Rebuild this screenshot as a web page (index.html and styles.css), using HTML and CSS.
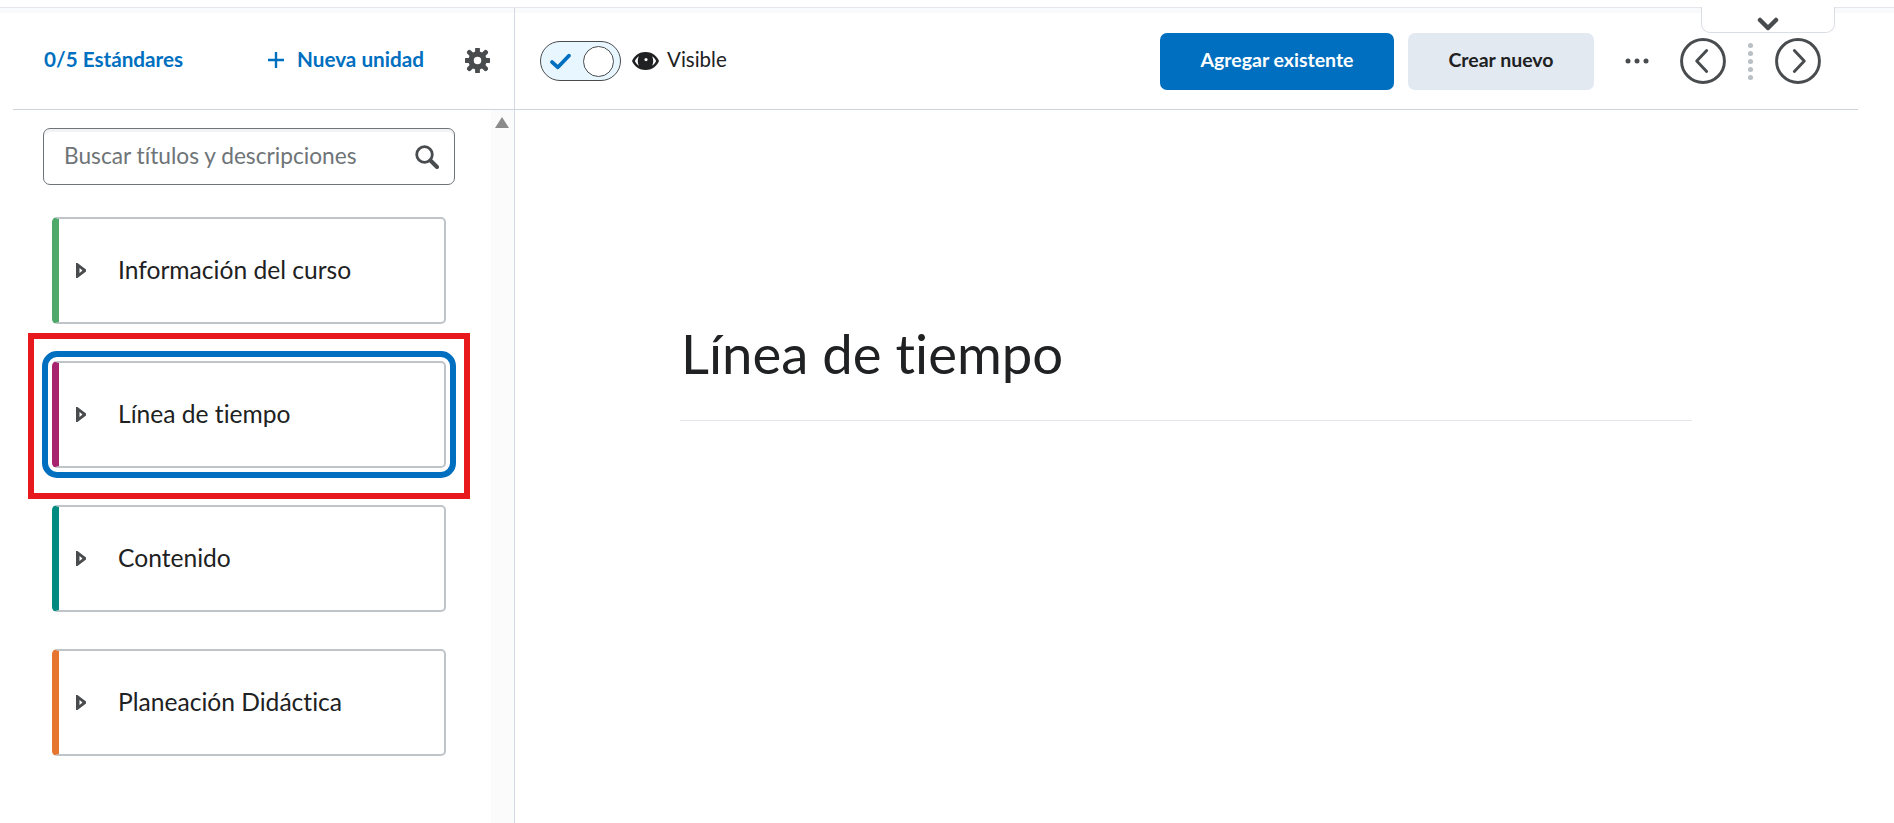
FILE: index.html
```html
<!DOCTYPE html>
<html lang="es">
<head>
<meta charset="utf-8">
<title>Línea de tiempo</title>
<link rel="stylesheet" href="styles.css">
</head>
<body>
<div class="top-rule"></div>
<div class="band"><span class="band-left"></span></div>
<div class="layout">
  <aside class="sidebar">
    <div class="side-head">
      <a class="standards">0/5 Estándares</a>
      <a class="new-unit">
        <svg class="plus" viewBox="0 0 16 16"><path d="M8 0v16M0 8h16" fill="none" stroke="#006fbf" stroke-width="2.400"/></svg>
        <span>Nueva unidad</span>
      </a>
      <svg class="gear" viewBox="0 0 24 24"><circle cx="12" cy="12" r="6.200" fill="none" stroke="#494c4e" stroke-width="5.200"/><path d="M12 1v4M12 19v4M1 12h4M19 12h4M4.200 4.200L7 7M17 17l2.800 2.800M4.200 19.800L7 17M17 7l2.800-2.800" fill="none" stroke="#494c4e" stroke-width="4.600" stroke-linecap="round"/></svg>
    </div>
    <div class="side-body">
      <div class="side-content">
        <div class="search">
          <span class="placeholder">Buscar títulos y descripciones</span>
          <svg class="search-icon" viewBox="0 0 24 24"><circle cx="9.500" cy="9.500" r="7.800" fill="none" stroke="#494c4e" stroke-width="2.800"/><path d="M15.500 15.500l6.500 6.500" stroke="#494c4e" stroke-width="4" stroke-linecap="round"/></svg>
        </div>
        <ul class="cards">
          <li class="card green"><svg class="caret" viewBox="0 0 10 15"><path fill="#494c4e" fill-rule="evenodd" d="M0 0h1.500L10 6.500v2L1.500 15H0zM3.500 5v5l3-2.500z"/></svg><span>Información del curso</span></li>
          <li class="card purple selected"><svg class="caret" viewBox="0 0 10 15"><path fill="#494c4e" fill-rule="evenodd" d="M0 0h1.500L10 6.500v2L1.500 15H0zM3.500 5v5l3-2.500z"/></svg><span>Línea de tiempo</span><i class="annotation"></i></li>
          <li class="card teal"><svg class="caret" viewBox="0 0 10 15"><path fill="#494c4e" fill-rule="evenodd" d="M0 0h1.500L10 6.500v2L1.500 15H0zM3.500 5v5l3-2.500z"/></svg><span>Contenido</span></li>
          <li class="card orange"><svg class="caret" viewBox="0 0 10 15"><path fill="#494c4e" fill-rule="evenodd" d="M0 0h1.500L10 6.500v2L1.500 15H0zM3.500 5v5l3-2.500z"/></svg><span>Planeación Didáctica</span></li>
        </ul>
      </div>
      <div class="scroll-track"><span class="scroll-up"></span></div>
    </div>
  </aside>
  <main class="main">
    <div class="main-head">
      <div class="toggle">
        <svg class="check" viewBox="0 0 20 16"><path d="M2 8.500l5.500 5L18 2.500" fill="none" stroke="#006fbf" stroke-width="3.600" stroke-linecap="round" stroke-linejoin="round"/></svg>
        <span class="knob"></span>
      </div>
      <svg class="eye" viewBox="0 0 27 18"><path fill="#202122" fill-rule="evenodd" d="M13.500 0C21 0 25.500 5 27 9c-1.500 4-6 9-13.500 9S1.500 13 0 9C1.500 5 6 0 13.500 0zM7 4.200C5 5.400 3.600 7.200 2.900 9c.7 1.800 2.100 3.600 4.100 4.800C6.200 12.600 5.800 10.800 5.800 9S6.200 5.400 7 4.200zm13 0c.8 1.200 1.200 3 1.200 4.800s-.4 3.600-1.200 4.800c2-1.200 3.400-3 4.100-4.800-.7-1.800-2.100-3.600-4.100-4.800zM14 6a1.600 1.600 0 1 0 0 3.200A1.600 1.600 0 0 0 14 6z"/></svg>
      <span class="visible">Visible</span>
      <div class="actions">
        <button class="btn primary">Agregar existente</button>
        <button class="btn secondary">Crear nuevo</button>
        <svg class="more" viewBox="0 0 24 6"><circle cx="3" cy="3" r="2.500"/><circle cx="12" cy="3" r="2.500"/><circle cx="21" cy="3" r="2.500"/></svg>
        <svg class="nav prev" viewBox="0 0 44 44"><circle cx="22" cy="22" r="20.500" fill="none" stroke="#494c4e" stroke-width="2.800"/><path d="M25.500 12L16 22l9.500 10" fill="none" stroke="#494c4e" stroke-width="2.800" stroke-linecap="round" stroke-linejoin="round"/></svg>
        <span class="grip"><i></i><i></i><i></i><i></i><i></i></span>
        <svg class="nav next" viewBox="0 0 44 44"><circle cx="22" cy="22" r="20.500" fill="none" stroke="#494c4e" stroke-width="2.800"/><path d="M18.500 12L28 22l-9.500 10" fill="none" stroke="#494c4e" stroke-width="2.800" stroke-linecap="round" stroke-linejoin="round"/></svg>
      </div>
    </div>
    <div class="main-body">
      <h1 class="title">Línea de tiempo</h1>
    </div>
  </main>
</div>
<div class="drop-tab">
  <svg class="chev" viewBox="0 0 22 14"><path d="M3 3l8 8 8-8" fill="none" stroke="#494c4e" stroke-width="4.500" stroke-linecap="round" stroke-linejoin="round"/></svg>
</div>
</body>
</html>
```
FILE: styles.css
```css
* { box-sizing: border-box; }
html, body { margin: 0; height: 100%; overflow: hidden; }
body {
  font-family: Lato, "Open Sans", sans-serif;
  font-variant-ligatures: none;
  color: #202122;
  background: #fff;
  position: relative;
}
.top-rule { height: 8px; border-bottom: 1px solid #e3e6ea; }
.band { height: 5px; background: #f9fafb; }
.band-left { display: block; width: 515px; height: 5px; border-right: 1px solid #d3d9e3; }
.layout { display: flex; height: 810px; }

.sidebar {
  width: 515px;
  flex: none;
  padding-left: 13px;
  border-right: 1px solid #d3d9e3;
  display: flex;
  flex-direction: column;
}
.side-head {
  height: 97px;
  flex: none;
  border-bottom: 1px solid #cdd5dc;
  display: flex;
  align-items: center;
  padding: 0 0 4px 31px;
  color: #006fbf;
  font-weight: 700;
  font-size: 20.700px;
}
.standards { width: 224px; }
.new-unit { display: flex; align-items: center; gap: 13px; width: 197px; }
.plus { width: 16px; height: 16px; margin-top: 2px; }
.gear { width: 25px; height: 25px; margin-top: 2px; }

.side-body { flex: 1; display: flex; min-height: 0; }
.side-content { flex: 1; padding: 18px 0 0 30px; }
.scroll-track { width: 23px; flex: none; background: #fbfbfb; padding: 7px 0 0 4px; }
.scroll-up {
  display: block;
  width: 0;
  border-left: 7.500px solid transparent;
  border-right: 7.500px solid transparent;
  border-bottom: 11px solid #8b8b8b;
}

.search {
  width: 412px;
  height: 57px;
  border: 1px solid #6e7477;
  border-radius: 7px;
  box-shadow: inset 0 3px 0 #f1f3f5;
  display: flex;
  align-items: center;
  justify-content: space-between;
  padding: 0 15px 3px 20px;
}
.placeholder { font-size: 22.700px; color: #6e7477; }
.search-icon { width: 24px; height: 24px; margin-top: 3px; }

.cards {
  list-style: none;
  margin: 32px 0 0 9px;
  padding: 0;
  display: flex;
  flex-direction: column;
  gap: 37px;
}
.card {
  position: relative;
  width: 394px;
  height: 107px;
  background: #fff;
  border: 2px solid #bfc4c9;
  border-left-width: 7px;
  border-radius: 5px;
  display: flex;
  align-items: center;
  padding-left: 17px;
  font-size: 24.600px;
}
.card span { margin-top: -2px; }
.card.green { border-left-color: #4fa96b; }
.card.purple { border-left-color: #a8236d; }
.card.teal { border-left-color: #008a80; }
.card.orange { border-left-color: #e6762f; }
.caret { width: 10px; height: 15px; margin-right: 32px; flex: none; }
.card.selected { outline: 6px solid #006fbf; outline-offset: 4px; border-radius: 5px; }
.annotation {
  position: absolute;
  left: -31px;
  right: -26px;
  top: -30px;
  bottom: -33px;
  border: 6px solid #e8191c;
  pointer-events: none;
}

.main { flex: 1; min-width: 0; }
.main-head {
  height: 97px;
  width: 1343px;
  border-bottom: 1px solid #cdd5dc;
  display: flex;
  align-items: center;
  padding: 0 37px 0 25px;
}
.toggle {
  width: 81px;
  height: 40px;
  border: 1.500px solid #494c4e;
  border-radius: 20px;
  background: #e8f7ff;
  display: flex;
  align-items: center;
  justify-content: space-between;
  padding: 0 6px 0 9px;
}
.check { width: 21px; height: 17px; }
.knob {
  width: 31px;
  height: 31px;
  border-radius: 50%;
  background: #fff;
  border: 1.500px solid #494c4e;
}
.eye { width: 27px; height: 18px; margin-left: 11px; }
.visible { font-size: 20.500px; margin: 0 0 4px 8px; }
.actions { margin-left: auto; display: flex; align-items: center; }
.btn {
  height: 57px;
  border: 0;
  border-radius: 7px;
  padding: 0 0 4px;
  font: 700 19.500px Lato, sans-serif;
  font-variant-ligatures: none;
}
.primary { width: 234px; background: #006fbf; color: #fff; }
.secondary { width: 186px; margin-left: 14px; background: #e3e9f1; color: #202122; }
.more { width: 24px; height: 6px; fill: #494c4e; margin-left: 31px; }
.nav { width: 46px; height: 46px; }
.prev { margin-left: 31px; }
.grip { display: flex; flex-direction: column; gap: 3px; margin: 0 22px 0 22px; width: 5px; }
.grip i { display: block; width: 5px; height: 5px; border-radius: 50%; background: #b8bfc5; }

.main-body { padding: 0 0 0 165px; }
.title {
  width: 1012px;
  margin: 0;
  padding: 212px 0 36px 1px;
  border-bottom: 1px solid #e3e6ea;
  font-size: 54.500px;
  font-weight: 400;
  line-height: 62px;
}

.drop-tab {
  position: absolute;
  left: 1701px;
  top: 7px;
  width: 134px;
  height: 26px;
  background: #fff;
  border: 1px solid #d9dee5;
  border-top: 0;
  border-radius: 0 0 9px 9px;
  display: flex;
  justify-content: center;
  padding-top: 10px;
}
.chev { width: 22px; height: 14px; }
```
